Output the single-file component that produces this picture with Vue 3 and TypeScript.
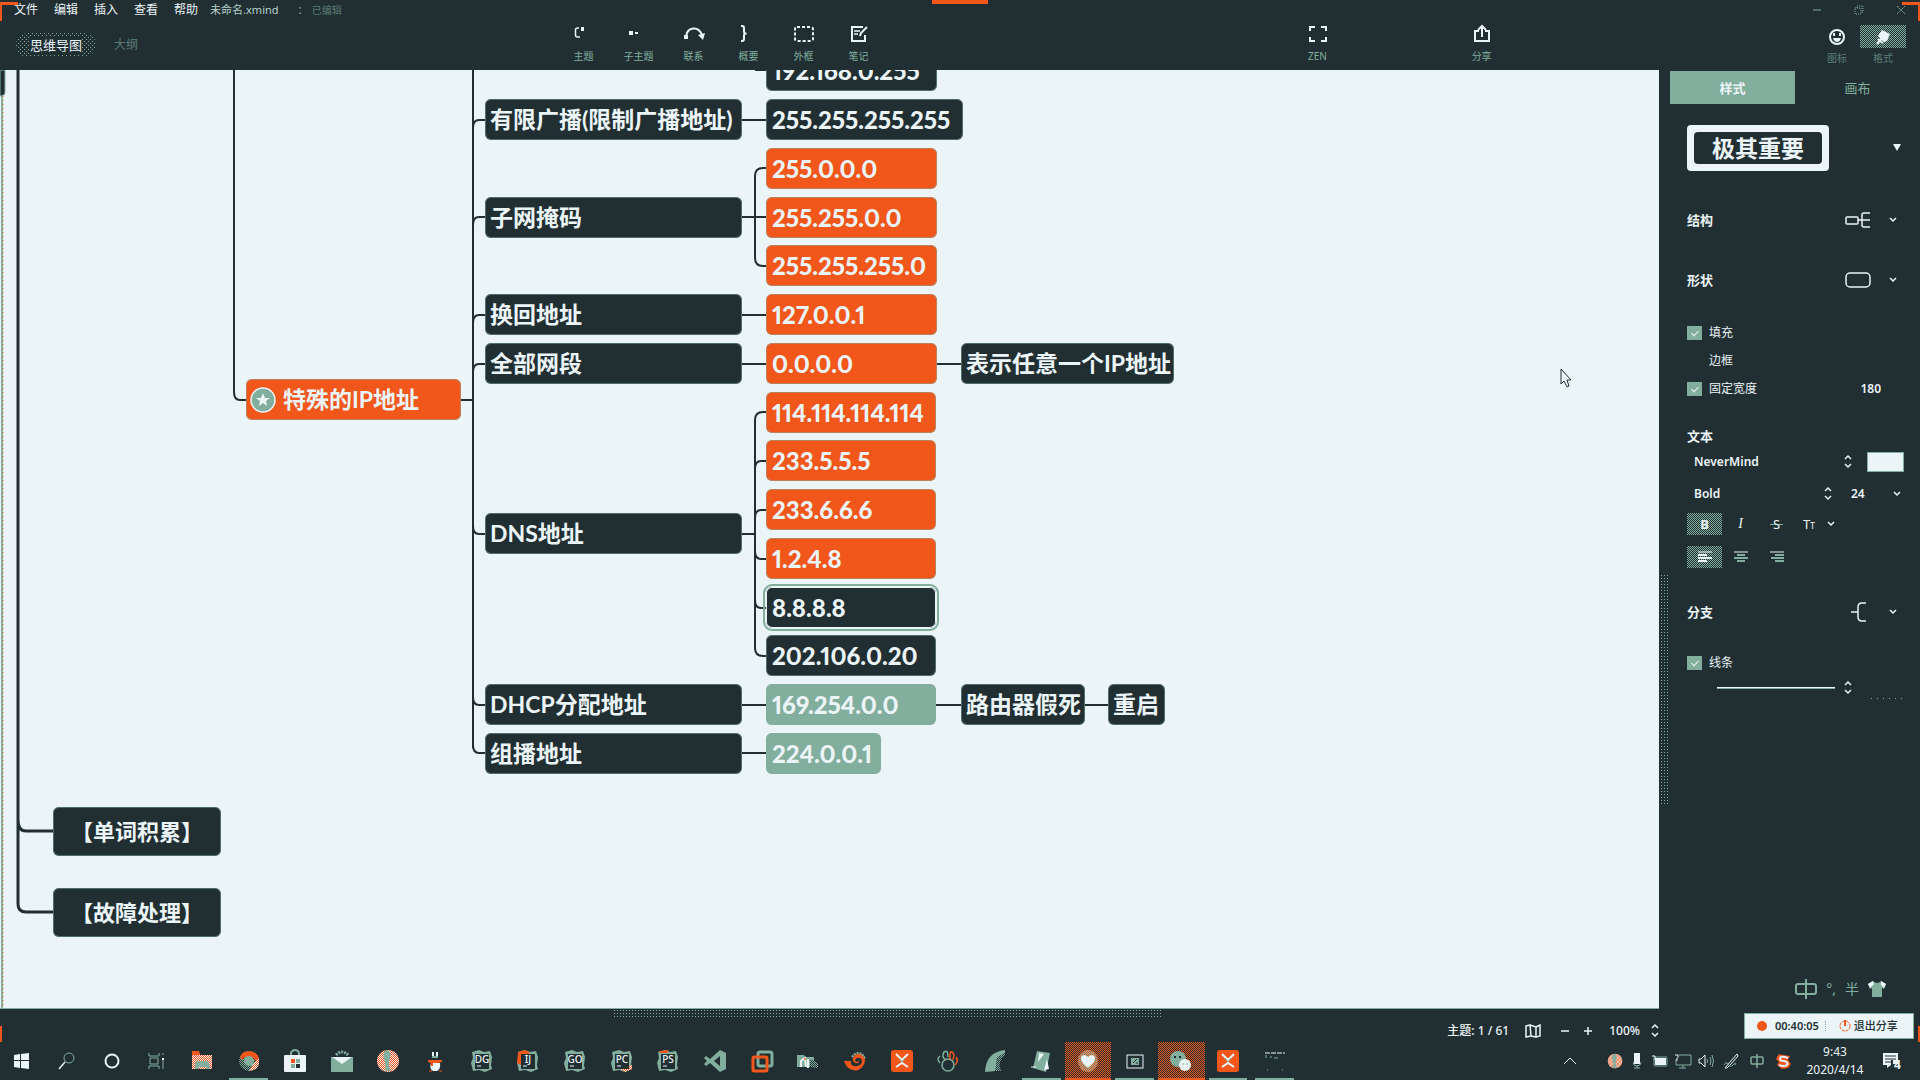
<script setup lang="ts">
interface Topic {
  text: string
  x: number
  y: number
  w: number
  tone: 'dark' | 'orange' | 'green'
  kind?: 'main' | 'marked' | 'selected'
}

const D = '#212f33'
const L = '#ebf4f7'
const G = '#82ae9d'
const O = '#f1561a'

const menus = ['文件', '编辑', '插入', '查看', '帮助']

const tools = [
  { label: '主题', icon: `<path d="M5 4H3.5Q1.5 4 1.5 6V11Q1.5 13 3.5 13H6" fill="none" stroke="${L}" stroke-width="1.5"/><rect x="7" y="3" width="3" height="4" fill="${L}"/>` },
  { label: '子主题', icon: `<rect x="0" y="7" width="4" height="4" fill="${L}"/><rect x="6" y="8" width="3" height="2" fill="${L}"/>` },
  { label: '联系', icon: `<path d="M2 13C3 3 14 1 18 11" fill="none" stroke="${L}" stroke-width="2"/><rect x="0" y="11" width="4" height="4" fill="${L}"/><path d="M14 11L21 9L19 16Z" fill="${L}"/>` },
  { label: '概要', icon: `<path d="M2 2H3Q5 2 5 4V8Q5 9.500 7.500 9.500Q5 9.500 5 11V15Q5 17 3 17H2" fill="none" stroke="${L}" stroke-width="2"/>` },
  { label: '外框', icon: `<rect x="1" y="3" width="18" height="14" rx="2" fill="none" stroke="${L}" stroke-width="2" stroke-dasharray="3 2"/>` },
  { label: '笔记', icon: `<path d="M14 3H3V17H16V11" fill="none" stroke="${L}" stroke-width="2"/><path d="M5 7H11M5 10H9" stroke="${L}" stroke-width="1.500"/><path d="M11 12L12 9L18 3" fill="none" stroke="${L}" stroke-width="2"/>` },
]

const topics: Topic[] = [
  { text: '特殊的IP地址', x: 246, y: 309, w: 215, tone: 'orange', kind: 'marked' },
  { text: '有限广播(限制广播地址)', x: 485, y: 29, w: 257, tone: 'dark' },
  { text: '子网掩码', x: 485, y: 127, w: 257, tone: 'dark' },
  { text: '换回地址', x: 485, y: 224, w: 257, tone: 'dark' },
  { text: '全部网段', x: 485, y: 273, w: 257, tone: 'dark' },
  { text: 'DNS地址', x: 485, y: 443, w: 257, tone: 'dark' },
  { text: 'DHCP分配地址', x: 485, y: 614, w: 257, tone: 'dark' },
  { text: '组播地址', x: 485, y: 663, w: 257, tone: 'dark' },
  { text: '192.168.0.255', x: 766, y: -20, w: 171, tone: 'dark' },
  { text: '255.255.255.255', x: 766, y: 29, w: 197, tone: 'dark' },
  { text: '255.0.0.0', x: 766, y: 78, w: 171, tone: 'orange' },
  { text: '255.255.0.0', x: 766, y: 127, w: 171, tone: 'orange' },
  { text: '255.255.255.0', x: 766, y: 175, w: 171, tone: 'orange' },
  { text: '127.0.0.1', x: 766, y: 224, w: 171, tone: 'orange' },
  { text: '0.0.0.0', x: 766, y: 273, w: 171, tone: 'orange' },
  { text: '114.114.114.114', x: 766, y: 322, w: 170, tone: 'orange' },
  { text: '233.5.5.5', x: 766, y: 370, w: 170, tone: 'orange' },
  { text: '233.6.6.6', x: 766, y: 419, w: 170, tone: 'orange' },
  { text: '1.2.4.8', x: 766, y: 468, w: 170, tone: 'orange' },
  { text: '8.8.8.8', x: 766, y: 517, w: 170, tone: 'dark', kind: 'selected' },
  { text: '202.106.0.20', x: 766, y: 565, w: 170, tone: 'dark' },
  { text: '169.254.0.0', x: 766, y: 614, w: 170, tone: 'green' },
  { text: '224.0.0.1', x: 766, y: 663, w: 115, tone: 'green' },
  { text: '表示任意一个IP地址', x: 961, y: 273, w: 213, tone: 'dark' },
  { text: '路由器假死', x: 961, y: 614, w: 124, tone: 'dark' },
  { text: '重启', x: 1108, y: 614, w: 57, tone: 'dark' },
  { text: '【单词积累】', x: 53, y: 737, w: 168, tone: 'dark', kind: 'main' },
  { text: '【故障处理】', x: 53, y: 818, w: 168, tone: 'dark', kind: 'main' },
]

const isAddress = (text: string) => /^[\d.]+$/.test(text)

const upper = [50, 147, 245, 294].map((y) => `M473 ${y + 8}Q473 ${y} 479 ${y}H486`)
const lower = [464, 635, 683].map((y) => `M473 ${y - 8}Q473 ${y} 479 ${y}H486`)
const dnsUp = [391, 440].map((y) => `M755 ${y + 8}Q755 ${y} 761 ${y}H767`)
const dnsDown = [489, 538].map((y) => `M755 ${y - 8}Q755 ${y} 761 ${y}H767`)
const thinLines = [
  'M234 0V322Q234 330 240 330H247',
  'M460 330H473M473 0V678',
  ...upper, ...lower, ...dnsUp, ...dnsDown,
  'M742 50H767M742 147H767M742 245H767M742 294H767M742 635H767M742 683H767',
  'M767 98H763Q755 98 755 106V188Q755 196 763 196H767',
  'M742 464H755M767 342H763Q755 342 755 350V578Q755 586 763 586H767',
  'M936 294H962M936 635H962M1084 635H1109',
  'M755 0H767',
].join('')

const jet = (t: string, accent: string) =>
  `<path d="M2 3L9 1L14 3L20 2L22 8L21 16L22 20L15 23L9 21L3 22L1 14L3 9Z" fill="${G}"/>${accent}<rect x="5" y="5" width="14" height="15" fill="${D}"/><text x="12" y="14" text-anchor="middle" font-family="Noto Sans" font-size="10" font-weight="500" fill="${L}">${t}</text><path d="M7 17H11" stroke="${L}"/>`
const xmind = `<rect x="1" y="1" width="22" height="22" rx="3" fill="${O}"/><path d="M6 5L12 11L18 5M6 18L12 14L18 18" fill="none" stroke="${L}" stroke-width="2"/><path d="M9 9L12 13L15 9" fill="none" stroke="${G}" stroke-width="1"/>`
const ball = `<ellipse cx="12" cy="12" rx="11" ry="11" fill="url(#mix-warm)"/><path d="M10 1Q16 2 14 9Q11 15 15 22H9Q10 15 8 10Q6 5 10 1Z" fill="${G}"/>`

const apps: { name: string; icon: string; state?: string }[] = [
  { name: '开始', icon: `<path d="M4 6L10 5V11H4ZM11 5L19 4V11H11ZM4 12H10V19L4 18ZM11 12H19V20L11 19Z" fill="${L}"/>` },
  { name: '搜索', icon: `<circle cx="14" cy="9" r="5" fill="none" stroke="${G}"/><path d="M10 13L4 20" stroke="${L}" stroke-width="1.500"/>` },
  { name: 'Cortana', icon: `<circle cx="12" cy="12" r="6.500" fill="none" stroke="${L}" stroke-width="2"/>` },
  { name: '任务视图', icon: `<path d="M5 4V7H15V4M5 20V17H15V20M6 9V15H14V9ZM19 4V6M19 9V20" fill="none" stroke="${G}" stroke-width="1"/><rect x="18" y="9" width="2" height="2" fill="${L}"/>` },
  { name: '文件资源管理器', icon: `<path d="M2 3H9L10 6H22V20H2Z" fill="url(#mix-warm)"/><path d="M2 2H9L10 6H2Z" fill="${O}"/><path d="M5 20V14Q6 12 8 12H17Q20 13 20 20H16V18H9V20Z" fill="${G}"/>` },
  { name: 'Chrome', state: 'open', icon: `<circle cx="12" cy="12" r="10" fill="url(#mix-cool)"/><path d="M3 8Q5 2 12 2Q19 2 22 9L21 14L15 8H8L5 11Z" fill="${O}"/><path d="M22 9V15Q20 22 12 22L16 15Z" fill="url(#mix-warm)"/><circle cx="12" cy="12" r="5" fill="${G}"/>` },
  { name: '应用商店', icon: `<path d="M8 7V4Q9 1 12 1Q15 1 16 4V7" fill="none" stroke="${G}" stroke-width="2"/><rect x="1" y="6" width="22" height="17" rx="1" fill="${L}"/><rect x="8" y="10" width="4" height="4" fill="${O}"/><rect x="13" y="10" width="4" height="4" fill="${G}"/><rect x="8" y="15" width="4" height="4" fill="${G}"/><rect x="13" y="15" width="4" height="4" fill="${D}"/>` },
  { name: '邮件', icon: `<path d="M6 6Q12 0 18 6" fill="none" stroke="${G}" stroke-width="3" stroke-dasharray="2 1"/><rect x="1" y="8" width="22" height="15" fill="${G}"/><path d="M2 8H22L12 15Z" fill="${L}"/>` },
  { name: '浏览器', icon: ball },
  { name: '雪人', icon: `<path d="M10 3V7M14 3V7" stroke="${L}" stroke-width="2"/><path d="M9 7H15V9H9Z" fill="${G}"/><path d="M5 11H19V13L14 14H8L5 13Z" fill="${O}"/><path d="M8 14H17Q18 20 14 22H10Q6 20 8 14Z" fill="${L}"/><path d="M9 12V17" stroke="${O}" stroke-width="2"/><path d="M6 22H9M16 22H19" stroke="${O}"/>` },
  { name: 'DataGrip', icon: jet('DG', '') },
  { name: 'IntelliJ IDEA', icon: jet('IJ', `<path d="M2 3L9 1L13 3V6L5 8V16L1 14Z" fill="${O}"/>`) },
  { name: 'GoLand', icon: jet('GO', '') },
  { name: 'PyCharm', icon: jet('PC', `<path d="M10 20L22 16V20L15 23Z" fill="url(#mix-warm)"/>`) },
  { name: 'PhpStorm', icon: jet('PS', `<path d="M3 2L13 1L11 4H4Z" fill="${O}"/>`) },
  { name: 'Visual Studio Code', icon: `<path d="M17 1L23 4V20L17 23L7 14L3 17L1 15L4 12L1 9L3 7L7 10ZM17 7L11 12L17 17Z" fill="${G}" fill-rule="evenodd"/>` },
  { name: 'VMware', icon: `<rect x="8" y="3" width="14" height="14" rx="2" fill="none" stroke="${G}" stroke-width="3"/><rect x="3" y="8" width="14" height="14" rx="1" fill="none" stroke="${O}" stroke-width="3"/>` },
  { name: '远程文件', icon: `<path d="M1 6H8L9 8H18V18H1Z" fill="${G}"/><path d="M5 18V12L9 9L10 18M12 10V19" stroke="${L}" stroke-width="2" fill="none"/><path d="M14 10L22 14V19L14 18Z" fill="url(#mix-cool)"/><circle cx="9" cy="10" r="1" fill="${O}"/>` },
  { name: '海螺', icon: `<path d="M1 12H8Q7 18 14 17Q19 16 19 12Q18 8 14 9Q11 11 13 13L16 12Q16 15 12 14Q8 11 11 7Q15 3 20 6Q24 11 20 17Q15 24 7 20Q3 18 1 12Z" fill="${O}"/><path d="M9 8Q13 2 19 5L22 9" fill="none" stroke="${G}" stroke-width="2" stroke-dasharray="2 1"/>` },
  { name: 'XMind 8', icon: xmind },
  { name: '百度网盘', icon: `<circle cx="12" cy="16" r="6" fill="none" stroke="${G}" stroke-width="1.500"/><path d="M10 11Q5 8 8 3Q12 0 12 8M4 14Q0 10 4 7" fill="none" stroke="${G}" stroke-width="1.500"/><path d="M14 10V4Q16 1 18 6L17 11M20 8Q23 12 19 16" fill="none" stroke="${O}" stroke-width="1.500"/>` },
  { name: 'Wireshark', icon: `<path d="M2 23Q3 3 22 1V4L14 9L13 22Z" fill="${G}"/><path d="M14 8L22 4V6Q14 12 18 22H12Z" fill="url(#mix-cool)"/>` },
  { name: '记事本', state: 'open', icon: `<path d="M8 2L21 4L17 23L4 19Z" fill="${G}"/><path d="M10 4L15 5L9 13ZM15 21L18 10L20 20Z" fill="${L}"/><path d="M2 18H7" stroke="${L}"/>` },
  { name: '直播助手', state: 'alert', icon: `<ellipse cx="12" cy="12" rx="10" ry="11" fill="url(#mix-hot)"/><path d="M12 19Q4 13 5 8Q8 4 12 8Q16 4 19 8Q20 13 12 19Z" fill="${L}"/>` },
  { name: '虚拟机', state: 'open', icon: `<rect x="4" y="6" width="16" height="13" fill="none" stroke="${L}"/><rect x="8" y="9" width="8" height="7" fill="${G}"/><path d="M10 14L14 10M13 14H15" stroke="${D}"/>` },
  { name: '微信', state: 'alert', icon: `<circle cx="9" cy="10" r="8" fill="${G}"/><circle cx="16" cy="16" r="6" fill="${L}"/><path d="M6 7V9M11 7V9" stroke="${D}" stroke-width="2"/><path d="M14 14V16M18 14V16" stroke="${G}"/>` },
  { name: 'XMind', state: 'open', icon: xmind },
  { name: '终端', state: 'open', icon: `<path d="M2 4H22" stroke="${L}" stroke-dasharray="5 1"/><path d="M3 6V9M7 8H9M11 9H15M4 21H5M19 21H20" stroke="${G}"/>` },
]

const tray: { name: string; icon: string; w: number }[] = [
  { name: '浏览器', w: 22, icon: `<g transform="scale(.67)">${ball}</g>` },
  { name: '麦克风', w: 22, icon: `<rect x="5" y="0" width="6" height="11" fill="${L}"/><path d="M4 9Q4 13 8 13Q12 13 12 9M8 13V15M5 15H11" fill="none" stroke="${G}"/>` },
  { name: '电源', w: 24, icon: `<rect x="3" y="5" width="11" height="7" fill="${L}"/><rect x="2" y="4" width="13" height="9" rx="1" fill="none" stroke="${G}"/><path d="M0 3H3V7" fill="none" stroke="${L}"/>` },
  { name: '网络', w: 22, icon: `<path d="M1 2H16V12H1ZM8 12V15M4 15H11" fill="none" stroke="${G}"/><rect x="0" y="1" width="4" height="5" fill="${D}"/><path d="M0 2H3V5M2 5V8" fill="none" stroke="${L}"/>` },
  { name: '音量', w: 24, icon: `<path d="M1 6H3L7 2V14L3 10H1Z" fill="none" stroke="${L}"/><path d="M9 6Q10 8 9 10M12 4Q14 8 12 12M14 2Q17 8 14 14" fill="none" stroke="${G}"/>` },
  { name: '输入笔', w: 26, icon: `<path d="M2 15L7 9L14 1L15 3L8 11L4 15Z" fill="none" stroke="${L}"/><path d="M1 12Q3 8 5 11Q7 15 10 12Q14 8 12 12" fill="none" stroke="${G}"/>` },
  { name: '中文输入', w: 26, icon: `<rect x="2" y="4" width="12" height="7" rx="1" fill="none" stroke="${G}" stroke-width="1.500"/><path d="M8 1V15" stroke="${G}" stroke-width="1.500"/>` },
  { name: '搜狗输入法', w: 26, icon: `<path d="M2 4L4 1L8 2L15 3L13 7L16 11L13 15L7 16L2 12L4 9L1 6Z" fill="${O}"/><path d="M13 5Q5 2 5 6Q5 8 9 8Q14 9 12 12Q9 14 4 12" fill="none" stroke="${L}" stroke-width="2"/>` },
]
</script>

<template>
  <div class="app">
    <svg class="defs" width="0" height="0" aria-hidden="true">
      <defs>
        <pattern id="mix-warm" width="2" height="2" patternUnits="userSpaceOnUse"><rect width="2" height="2" fill="#ebf4f7" /><rect width="1" height="1" fill="#f1561a" /><rect x="1" y="1" width="1" height="1" fill="#f1561a" /></pattern>
        <pattern id="mix-cool" width="2" height="2" patternUnits="userSpaceOnUse"><rect width="2" height="2" fill="#212f33" /><rect width="1" height="1" fill="#82ae9d" /><rect x="1" y="1" width="1" height="1" fill="#82ae9d" /></pattern>
        <pattern id="mix-hot" width="2" height="2" patternUnits="userSpaceOnUse"><rect width="2" height="2" fill="#f1561a" /><rect width="1" height="1" fill="#82ae9d" /><rect x="1" y="1" width="1" height="1" fill="#82ae9d" /></pattern>
      </defs>
    </svg>

    <header class="header">
      <nav class="menubar">
        <button v-for="m in menus" :key="m" class="menu">{{ m }}</button>
        <span class="doc">未命名.xmind</span>
        <span class="doc-sep">:</span>
        <span class="doc-state">已编辑</span>
        <div class="win">
          <button aria-label="最小化"><svg width="10" height="10"><path d="M1 5H9" stroke="#82ae9d" /></svg></button>
          <button aria-label="还原"><svg width="10" height="10"><path d="M1 3H7V9H1ZM3 3V1H9V7H7" fill="none" stroke="#82ae9d" stroke-dasharray="1 1" /></svg></button>
          <button aria-label="关闭"><svg width="10" height="10"><path d="M1 1L9 9M9 1L1 9" stroke="#82ae9d" stroke-dasharray="2 1" /></svg></button>
        </div>
      </nav>
      <div class="toolbar">
        <div class="modes">
          <button class="mode active"><span>思维导图</span></button>
          <button class="mode">大纲</button>
        </div>
        <button v-for="t in tools" :key="t.label" class="tool">
          <svg width="20" height="20" viewBox="0 0 20 20" v-html="t.icon"></svg>
          <span>{{ t.label }}</span>
        </button>
        <i class="gap-wide"></i>
        <button class="tool zen">
          <svg width="20" height="20" viewBox="0 0 20 20"><path d="M2 7V3H7M13 3H18V7M18 13V17H13M7 17H2V13" fill="none" stroke="#ebf4f7" stroke-width="2" /></svg>
          <span>ZEN</span>
        </button>
        <i class="gap-small"></i>
        <button class="tool zen">
          <svg width="20" height="20" viewBox="0 0 20 20"><path d="M7 7H3V17H17V7H13M10 13V3M6 6L10 2L14 6" fill="none" stroke="#ebf4f7" stroke-width="2" /></svg>
          <span>分享</span>
        </button>
        <i class="gap-mid"></i>
        <button class="panel-btn">
          <b><svg width="20" height="20" viewBox="0 0 20 20"><circle cx="10" cy="10" r="7" fill="none" stroke="#ebf4f7" stroke-width="2" /><path d="M7 6V9M13 6V9" stroke="#ebf4f7" stroke-width="2" /><path d="M6 11H14Q13 15 10 15Q7 15 6 11Z" fill="#ebf4f7" /></svg></b>
          <span>图标</span>
        </button>
        <button class="panel-btn on">
          <b><svg width="20" height="20" viewBox="0 0 20 20"><path d="M9 3L17 7L14 14L11 15L5 9Z" fill="#ebf4f7" /><path d="M9 11L4 17M5 12L10 16" stroke="#ebf4f7" stroke-width="2" /></svg></b>
          <span>格式</span>
        </button>
      </div>
    </header>

    <div class="workspace">
      <main class="canvas">
        <svg class="links" width="1659" height="938" fill="none" stroke="#212f33">
          <path d="M2 26V938" stroke="#82ae9d" stroke-width="2" />
          <path d="M3 26V938" stroke="#f1561a" stroke-width="1" stroke-dasharray="1 3" />
          <path d="M0 0H5V22Q5 26 0 26Z" fill="#212f33" stroke="#82ae9d" />
          <path d="M18 0V834Q18 842 26 842H54M18 750Q18 761 26 761H54" stroke-width="3" />
          <path :d="thinLines" stroke-width="2" />
        </svg>
        <div
          v-for="t in topics"
          :key="t.text"
          class="topic"
          :class="[t.tone, t.kind, { address: isAddress(t.text) }]"
          :style="{ left: t.x + 'px', top: t.y + 'px', width: t.w + 'px' }"
        >
          <svg v-if="t.kind === 'marked'" width="26" height="26" viewBox="0 0 26 26"><circle cx="13" cy="13" r="12" fill="#82ae9d" stroke="#ebf4f7" stroke-width="1.500" /><path d="M13 6L15 11H20L16 14L17 19L13 16L9 19L10 14L6 11H11Z" fill="#ebf4f7" /></svg>
          <span>{{ t.text }}</span>
        </div>
        <svg class="pointer" width="12" height="20" viewBox="0 0 12 20"><path d="M1 1V16L4 13L7 19L9 18L7 12H11Z" fill="#ebf4f7" stroke="#212f33" /></svg>
      </main>

      <aside class="side">
        <i class="vbar"></i>
        <div class="tabs">
          <button class="tab active">样式</button>
          <button class="tab">画布</button>
        </div>
        <div class="panel">
          <div class="preview">
            <button class="swatch"><span>极其重要</span></button>
            <svg width="16" height="10"><path d="M4 1H12L8 8Z" fill="#ebf4f7" /></svg>
          </div>
          <div class="head">
            <h2>结构</h2>
            <button aria-label="结构"><svg width="26" height="20" fill="none" stroke="#ebf4f7"><rect x="1" y="7" width="12" height="7" rx="1" stroke-width="1.500" /><path d="M13 10H25M25 3H19Q17 3 17 5V15Q17 17 19 17H25" stroke-width="1.500" /></svg><svg class="chev" width="8" height="6"><path d="M1 1L4 4L7 1" /></svg></button>
          </div>
          <div class="head">
            <h2>形状</h2>
            <button aria-label="形状"><svg width="26" height="20" fill="none" stroke="#ebf4f7"><rect x="1" y="3" width="24" height="14" rx="4" stroke-width="1.500" /></svg><svg class="chev" width="8" height="6"><path d="M1 1L4 4L7 1" /></svg></button>
          </div>
          <div class="checks">
            <label class="check"><input type="checkbox" checked />填充</label>
            <label class="check"><input type="checkbox" />边框</label>
            <div class="check-row">
              <label class="check"><input type="checkbox" checked />固定宽度</label>
              <input class="num" type="text" value="180" aria-label="宽度" />
            </div>
          </div>
          <h2 class="text-head">文本</h2>
          <div class="font-row">
            <select aria-label="字体"><option>NeverMind</option></select>
            <svg class="chev" width="8" height="14"><path d="M1 4L4 1L7 4M1 9L4 12L7 9" /></svg>
            <button class="color" aria-label="文字颜色"></button>
          </div>
          <div class="weight-row">
            <select aria-label="字重"><option>Bold</option></select>
            <svg class="chev" width="8" height="14"><path d="M1 4L4 1L7 4M1 9L4 12L7 9" /></svg>
            <select class="size" aria-label="字号"><option>24</option></select>
            <svg class="chev" width="8" height="6"><path d="M1 1L4 4L7 1" /></svg>
          </div>
          <div class="fmt">
            <button class="on bold">B</button>
            <button class="italic">I</button>
            <button class="strike" aria-label="S"><span>S</span></button>
            <button class="case">T<small>T</small><svg class="chev" width="8" height="6"><path d="M1 1L4 4L7 1" /></svg></button>
          </div>
          <div class="fmt align">
            <button class="on" aria-label="左对齐"><svg width="14" height="12"><path d="M0 1H14" stroke="#ebf4f7" /><path d="M0 4H9M0 7H14M0 10H9" stroke="#ebf4f7" stroke-width="2" /></svg></button>
            <button aria-label="居中"><svg width="14" height="12"><path d="M0 1H14" stroke="#ebf4f7" /><path d="M3 4H11M0 7H14M3 10H11" stroke="#82ae9d" stroke-width="2" /></svg></button>
            <button aria-label="右对齐"><svg width="14" height="12"><path d="M0 1H14" stroke="#ebf4f7" /><path d="M5 4H14M1 7H14M5 10H14" stroke="#82ae9d" stroke-width="2" /></svg></button>
          </div>
          <div class="head branch">
            <h2>分支</h2>
            <button aria-label="分支"><svg width="26" height="20" fill="none" stroke="#ebf4f7"><path d="M6 10H13M21 1H17Q13 1 13 5V15Q13 19 17 19H21" stroke-width="1.500" /></svg><svg class="chev" width="8" height="6"><path d="M1 1L4 4L7 1" /></svg></button>
          </div>
          <label class="check line-check"><input type="checkbox" checked />线条</label>
          <button class="line-row" aria-label="线条样式">
            <i class="line"></i>
            <svg class="chev" width="8" height="14"><path d="M1 4L4 1L7 4M1 9L4 12L7 9" /></svg>
            <i class="dots"></i>
          </button>
        </div>
      </aside>
    </div>

    <footer class="status">
      <i class="hbar"></i>
      <span class="count">主题: 1 / 61</span>
      <button aria-label="导航图"><svg width="16" height="14" fill="none" stroke="#ebf4f7" stroke-width="1.500"><path d="M1 2L5 1L6 12L1 13ZM5 1L11 3V13L6 12M11 3L15 1V12L11 13" /></svg></button>
      <button class="zoom-out" aria-label="缩小"><svg width="8" height="8"><path d="M0 4H8" stroke="#ebf4f7" stroke-width="1.500" /></svg></button>
      <button class="zoom-in" aria-label="放大"><svg width="8" height="8"><path d="M0 4H8M4 0V8" stroke="#ebf4f7" stroke-width="1.500" /></svg></button>
      <span class="percent">100%</span>
      <svg class="chev" width="8" height="14"><path d="M1 4L4 1L7 4M1 9L4 12L7 9" /></svg>
    </footer>

    <footer class="taskbar">
      <div class="apps">
        <button v-for="a in apps" :key="a.name" :class="a.state" :aria-label="a.name">
          <svg width="24" height="24" viewBox="0 0 24 24" v-html="a.icon"></svg>
        </button>
      </div>
      <div class="tray">
        <button class="more" aria-label="显示隐藏的图标"><svg width="14" height="8"><path d="M1 7L7 1L13 7" fill="none" stroke="#ebf4f7" /></svg></button>
        <button v-for="i in tray" :key="i.name" :aria-label="i.name" :style="{ width: i.w + 'px' }">
          <svg width="16" height="16" viewBox="0 0 16 16" v-html="i.icon"></svg>
        </button>
        <time class="clock"><span>9:43</span><span>2020/4/14</span></time>
        <button class="notes" aria-label="通知"><svg width="18" height="18"><path d="M0 1H15V12H10V8H8V13L4 16V13H0Z" fill="#ebf4f7" /><path d="M2 4H13M2 7H13M2 10H8" stroke="#212f33" /></svg><span>4</span></button>
      </div>
    </footer>

    <div class="ime">
      <svg width="22" height="20" fill="none" stroke="#82ae9d"><rect x="1" y="5" width="20" height="10" rx="2" stroke-width="2" /><path d="M11 0V20" stroke-width="2" /></svg>
      <span>°,</span><span>半</span>
      <svg width="18" height="16"><path d="M0 3L5 0Q9 4 13 0L18 3L16 8L14 7V16H4V7L2 8Z" fill="#82ae9d" /><path d="M0 3L5 0L6 3L2 7ZM13 0L18 3L16 7L13 4Z" fill="#ebf4f7" /></svg>
    </div>
    <div class="recorder">
      <i class="rec"></i>
      <span class="elapsed">00:40:05</span>
      <i class="sep"></i>
      <button><svg width="12" height="12" fill="none"><circle cx="6" cy="6" r="5" stroke="#f1561a" stroke-dasharray="3 1" /><path d="M6 0V6" stroke="#f1561a" stroke-width="2" /></svg>退出分享</button>
    </div>
    <i class="corner tl"></i><i class="corner tr"></i><i class="corner bl"></i><i class="corner br"></i><i class="corner top"></i>
  </div>
</template>

<style>
body {
  margin: 0;
  background: #212f33;
}
</style>

<style scoped>
.app {
  position: relative;
  display: flex;
  flex-direction: column;
  min-height: 100vh;
  overflow: hidden;
  background: #212f33;
  color: #ebf4f7;
  font-family: "Noto Sans", "Noto Sans CJK SC", sans-serif;
  font-size: 12px;
  line-height: 16px;
}
.defs { position: absolute; }
button, select, input {
  margin: 0;
  padding: 0;
  border: 0;
  background: none;
  color: inherit;
  font: inherit;
  appearance: none;
  border-radius: 0;
}
svg { display: block; flex: none; overflow: visible; }
h2 { margin: 0; font-size: 13px; line-height: 16px; font-weight: 700; }
.chev { fill: none; stroke: #ebf4f7; stroke-width: 1.5; }

.menubar { display: flex; align-items: center; height: 20px; padding-left: 14px; }
.menu { margin-right: 16px; }
.doc { margin-right: 20px; margin-left: -4px; color: #b6d1ca; font-size: 11px; }
.doc-sep { color: #82ae9d; margin-right: 10px; }
.doc-state { color: #5c7d74; font-size: 10px; }
.win { display: flex; gap: 32px; margin-left: auto; padding-right: 14px; }

.toolbar { display: flex; align-items: flex-start; height: 50px; padding-right: 14px; }
.modes { display: flex; align-items: center; flex: none; gap: 18px; width: 540px; padding: 13px 0 0 16px; }
.mode { height: 24px; color: #5c7d74; }
.mode.active {
  width: 80px;
  border-radius: 12px;
  color: #ebf4f7;
  font-size: 13px;
  background: conic-gradient(at 1px 1px, transparent 75%, #82ae9d 0) 0 0 / 4px 4px, conic-gradient(at 1px 1px, transparent 75%, #82ae9d 0) 2px 2px / 4px 4px;
}
.mode.active span { background: #212f33; }
.tool { display: flex; flex: none; flex-direction: column; align-items: center; gap: 4px; width: 55px; padding-top: 4px; }
.zen { width: 56px; }
.tool span { color: #82ae9d; font-size: 10px; line-height: 16px; }
.gap-wide { flex: 403 1 0; }
.gap-small { flex: 108 1 0; }
.gap-mid { flex: 304 1 0; }
.panel-btn { display: flex; flex-direction: column; align-items: center; gap: 2px; width: 46px; padding-top: 5px; }
.panel-btn b { display: flex; align-items: center; justify-content: center; width: 46px; height: 23px; }
.panel-btn.on b { background: conic-gradient(#82ae9d 25%, transparent 0 50%, #82ae9d 0 75%, transparent 0) 0 0 / 2px 2px; }
.panel-btn span { color: #5c7d74; font-size: 10px; }

.workspace { display: flex; flex: 1; }
.canvas { position: relative; flex: 1; min-width: 0; overflow: hidden; background: #ebf4f7; border-bottom: 1px solid #82ae9d; }
.links { position: absolute; left: 0; top: 0; }
.topic {
  position: absolute;
  display: flex;
  align-items: center;
  gap: 8px;
  box-sizing: border-box;
  height: 41px;
  padding-left: 5px;
  border-radius: 6px;
  box-shadow: inset 0 0 0 1px rgba(130, 174, 157, 0.5);
  font-family: Lato, "Noto Sans CJK SC", sans-serif;
  font-size: 23px;
  font-weight: 700;
  line-height: 41px;
  white-space: nowrap;
}
.address { padding-left: 6px; font-size: 24px; font-weight: 900; font-variant-numeric: proportional-nums; }
.dark { background: #212f33; }
.orange { background: #f1561a; }
.green { background: #82ae9d; }
.marked { padding-left: 4px; gap: 7px; }
.main { justify-content: center; height: 49px; padding: 0; font-size: 22px; line-height: 49px; }
.selected { outline: 2px solid #82ae9d; outline-offset: 1px; box-shadow: inset 0 0 0 1px #ebf4f7; }
.pointer { position: absolute; left: 1560px; top: 298px; }

.side { position: relative; flex: none; width: 261px; box-sizing: border-box; padding: 1px 0 0 11px; }
.vbar {
  position: absolute;
  left: 2px;
  top: 505px;
  width: 7px;
  height: 230px;
  background: conic-gradient(at 1px 1px, transparent 75%, #82ae9d 0) 0 0 / 3px 3px;
}
.tabs { display: flex; }
.tab { flex: 1; height: 33px; color: #82ae9d; font-size: 13px; }
.tab.active { background: #82ae9d; color: #ebf4f7; font-weight: 700; }
.panel { display: flex; flex-direction: column; padding: 21px 15px 0 17px; }
.preview { display: flex; align-items: center; justify-content: space-between; margin-bottom: 19px; }
.swatch { width: 142px; height: 46px; padding: 7px; border-radius: 4px; background: #ebf4f7; }
.swatch span {
  display: block;
  height: 32px;
  border-radius: 4px;
  background: #212f33;
  font-size: 23px;
  font-weight: 700;
  line-height: 32px;
}
.head { display: flex; align-items: center; justify-content: space-between; height: 60px; }
.head button { display: flex; align-items: center; gap: 18px; padding-right: 8px; }
.checks { display: flex; flex-direction: column; margin-top: 9px; }
.check-row { display: flex; justify-content: space-between; }
.check { display: flex; align-items: center; gap: 7px; height: 28px; }
.check input { display: flex; align-items: center; justify-content: center; width: 15px; height: 14px; }
.check input:checked { background: #82ae9d; }
.check input:checked::after {
  content: "";
  width: 3px;
  height: 6px;
  margin-bottom: 2px;
  border: solid #ebf4f7;
  border-width: 0 1px 1px 0;
  transform: rotate(45deg);
}
.num { width: 40px; margin-right: 24px; text-align: right; font-weight: 600; }
.text-head { margin-top: 20px; line-height: 26px; }
.font-row, .weight-row { display: flex; align-items: center; height: 25px; padding-left: 7px; font-weight: 600; font-size: 12px; }
.font-row select { width: 150px; }
.color { width: 37px; height: 20px; margin-left: 15px; background: #ebf4f7; border: 1px solid #82ae9d; box-sizing: border-box; }
.weight-row { height: 30px; margin-top: 5px; }
.weight-row select { width: 130px; }
.weight-row .size { width: 30px; margin: 0 12px 0 19px; }
.fmt { display: flex; gap: 1px; height: 22px; margin-top: 4px; }
.fmt button { display: flex; align-items: center; justify-content: center; width: 35px; font-size: 13px; }
.fmt .on { background: conic-gradient(#82ae9d 25%, transparent 0 50%, #82ae9d 0 75%, transparent 0) 0 0 / 2px 2px; }
.fmt .bold { font-weight: 700; }
.fmt .italic { font-family: "Liberation Serif", serif; font-style: italic; font-size: 14px; }
.strike span { padding: 0 3px; background: linear-gradient(#82ae9d, #82ae9d) 0 50% / 100% 1px no-repeat; line-height: 16px; }
.fmt .case { width: 48px; }
.case small { font-size: 9px; padding-top: 3px; }
.case .chev { margin-left: 12px; }
.align { margin-top: 11px; }
.branch { margin-top: 14px; }
.line-check { margin-top: 7px; }
.line-row { display: flex; align-items: center; height: 22px; padding-left: 30px; }
.line { width: 118px; height: 2px; background: #ebf4f7; border-bottom: 1px solid #82ae9d; margin-right: 9px; box-sizing: border-box; }
.dots { align-self: flex-end; width: 32px; height: 1px; margin-left: 19px; background: repeating-linear-gradient(90deg, #82ae9d 0 1px, transparent 1px 6px); }

.status { position: relative; display: flex; align-items: center; justify-content: flex-end; height: 33px; padding: 11px 261px 0 0; box-sizing: border-box; font-weight: 600; }
.hbar {
  position: absolute;
  left: 32%;
  top: 1px;
  width: 547px;
  height: 7px;
  background: conic-gradient(at 1px 1px, transparent 75%, #82ae9d 0) 0 0 / 3px 3px;
}
.count { margin-right: 16px; font-weight: 500; }
.zoom-out { margin-left: 20px; }
.zoom-in { margin-left: 15px; }
.percent { margin: 0 11px 0 17px; font-weight: 500; }

.taskbar { display: flex; justify-content: space-between; height: 38px; }
.apps { display: grid; grid-template-columns: repeat(4, 45fr) repeat(24, 47fr); width: 68%; max-width: 1298px; }
.apps button { display: flex; align-items: center; justify-content: center; }
.apps .open { margin: 0 4px; box-shadow: inset 0 -2px #82ae9d; }
.apps .alert { box-shadow: inset 0 -2px #f1561a; background: conic-gradient(#f1561a 25%, #212f33 0 50%, #f1561a 0 75%, #212f33 0) 0 0 / 2px 2px; }
.tray { display: flex; align-items: center; }
.tray button { display: flex; align-items: center; justify-content: center; }
.more { width: 14px; margin-right: 27px; }
.clock { display: flex; flex-direction: column; align-items: center; width: 78px; line-height: 18px; }
.tray .notes { position: relative; width: 36px; margin-right: 10px; }
.notes span { position: absolute; left: 20px; top: 5px; font-weight: 700; font-size: 12px; }

.ime { position: absolute; right: 34px; bottom: 80px; display: flex; align-items: center; gap: 9px; height: 22px; color: #82ae9d; font-size: 14px; }
.recorder {
  position: absolute;
  right: 6px;
  bottom: 41px;
  display: flex;
  align-items: center;
  box-sizing: border-box;
  width: 170px;
  height: 26px;
  padding-left: 12px;
  background: #ebf4f7;
  border: 1px solid #82ae9d;
  color: #212f33;
}
.rec { width: 10px; height: 10px; margin-right: 8px; border-radius: 50%; background: #f1561a; }
.elapsed { font-size: 11px; font-weight: 600; }
.sep { height: 10px; margin: 0 13px 0 6px; border-left: 1px dotted #82ae9d; }
.recorder button { display: flex; align-items: center; gap: 3px; font-size: 11px; font-weight: 500; }

.corner { position: absolute; box-sizing: border-box; border: 0 solid #f1561a; }
.tl { left: 0; top: 2px; width: 18px; height: 19px; border-width: 3px 0 0 2px; }
.tr { right: 0; top: 2px; width: 18px; height: 19px; border-width: 3px 2px 0 0; }
.bl { left: 0; bottom: 38px; width: 2px; height: 16px; border-width: 0 0 0 2px; }
.br { right: 0; bottom: 38px; width: 2px; height: 16px; border-width: 0 0 0 2px; }
.top { left: calc(50% - 28px); top: 0; width: 56px; height: 4px; border-width: 4px 0 0; }
</style>
